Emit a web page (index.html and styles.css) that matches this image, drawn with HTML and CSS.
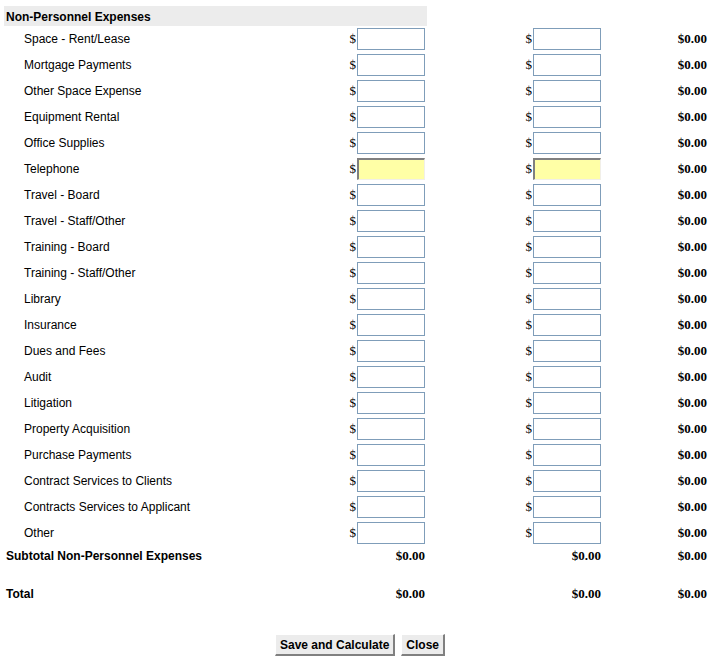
FILE: index.html
```html
<!DOCTYPE html>
<html>
<head>
<meta charset="utf-8">
<link rel="stylesheet" href="styles.css">
</head>
<body>
<div class="sheet">
  <div class="section-head">Non-Personnel Expenses</div>

  <div class="row item"><div class="label">Space - Rent/Lease</div><div class="cell"><span class="cur">$</span><input class="amt" type="text"></div><div class="cell wide"><span class="cur">$</span><input class="amt" type="text"></div><div class="cell total">$0.00</div></div>
  <div class="row item"><div class="label">Mortgage Payments</div><div class="cell"><span class="cur">$</span><input class="amt" type="text"></div><div class="cell wide"><span class="cur">$</span><input class="amt" type="text"></div><div class="cell total">$0.00</div></div>
  <div class="row item"><div class="label">Other Space Expense</div><div class="cell"><span class="cur">$</span><input class="amt" type="text"></div><div class="cell wide"><span class="cur">$</span><input class="amt" type="text"></div><div class="cell total">$0.00</div></div>
  <div class="row item"><div class="label">Equipment Rental</div><div class="cell"><span class="cur">$</span><input class="amt" type="text"></div><div class="cell wide"><span class="cur">$</span><input class="amt" type="text"></div><div class="cell total">$0.00</div></div>
  <div class="row item"><div class="label">Office Supplies</div><div class="cell"><span class="cur">$</span><input class="amt" type="text"></div><div class="cell wide"><span class="cur">$</span><input class="amt" type="text"></div><div class="cell total">$0.00</div></div>
  <div class="row item"><div class="label">Telephone</div><div class="cell"><span class="cur">$</span><input class="amt hl" type="text"></div><div class="cell wide"><span class="cur">$</span><input class="amt hl" type="text"></div><div class="cell total">$0.00</div></div>
  <div class="row item"><div class="label">Travel - Board</div><div class="cell"><span class="cur">$</span><input class="amt" type="text"></div><div class="cell wide"><span class="cur">$</span><input class="amt" type="text"></div><div class="cell total">$0.00</div></div>
  <div class="row item"><div class="label">Travel - Staff/Other</div><div class="cell"><span class="cur">$</span><input class="amt" type="text"></div><div class="cell wide"><span class="cur">$</span><input class="amt" type="text"></div><div class="cell total">$0.00</div></div>
  <div class="row item"><div class="label">Training - Board</div><div class="cell"><span class="cur">$</span><input class="amt" type="text"></div><div class="cell wide"><span class="cur">$</span><input class="amt" type="text"></div><div class="cell total">$0.00</div></div>
  <div class="row item"><div class="label">Training - Staff/Other</div><div class="cell"><span class="cur">$</span><input class="amt" type="text"></div><div class="cell wide"><span class="cur">$</span><input class="amt" type="text"></div><div class="cell total">$0.00</div></div>
  <div class="row item"><div class="label">Library</div><div class="cell"><span class="cur">$</span><input class="amt" type="text"></div><div class="cell wide"><span class="cur">$</span><input class="amt" type="text"></div><div class="cell total">$0.00</div></div>
  <div class="row item"><div class="label">Insurance</div><div class="cell"><span class="cur">$</span><input class="amt" type="text"></div><div class="cell wide"><span class="cur">$</span><input class="amt" type="text"></div><div class="cell total">$0.00</div></div>
  <div class="row item"><div class="label">Dues and Fees</div><div class="cell"><span class="cur">$</span><input class="amt" type="text"></div><div class="cell wide"><span class="cur">$</span><input class="amt" type="text"></div><div class="cell total">$0.00</div></div>
  <div class="row item"><div class="label">Audit</div><div class="cell"><span class="cur">$</span><input class="amt" type="text"></div><div class="cell wide"><span class="cur">$</span><input class="amt" type="text"></div><div class="cell total">$0.00</div></div>
  <div class="row item"><div class="label">Litigation</div><div class="cell"><span class="cur">$</span><input class="amt" type="text"></div><div class="cell wide"><span class="cur">$</span><input class="amt" type="text"></div><div class="cell total">$0.00</div></div>
  <div class="row item"><div class="label">Property Acquisition</div><div class="cell"><span class="cur">$</span><input class="amt" type="text"></div><div class="cell wide"><span class="cur">$</span><input class="amt" type="text"></div><div class="cell total">$0.00</div></div>
  <div class="row item"><div class="label">Purchase Payments</div><div class="cell"><span class="cur">$</span><input class="amt" type="text"></div><div class="cell wide"><span class="cur">$</span><input class="amt" type="text"></div><div class="cell total">$0.00</div></div>
  <div class="row item"><div class="label">Contract Services to Clients</div><div class="cell"><span class="cur">$</span><input class="amt" type="text"></div><div class="cell wide"><span class="cur">$</span><input class="amt" type="text"></div><div class="cell total">$0.00</div></div>
  <div class="row item"><div class="label">Contracts Services to Applicant</div><div class="cell"><span class="cur">$</span><input class="amt" type="text"></div><div class="cell wide"><span class="cur">$</span><input class="amt" type="text"></div><div class="cell total">$0.00</div></div>
  <div class="row item"><div class="label">Other</div><div class="cell"><span class="cur">$</span><input class="amt" type="text"></div><div class="cell wide"><span class="cur">$</span><input class="amt" type="text"></div><div class="cell total">$0.00</div></div>

  <div class="row sum"><div class="label strong">Subtotal Non-Personnel Expenses</div><div class="cell total">$0.00</div><div class="cell wide total">$0.00</div><div class="cell total">$0.00</div></div>
  <div class="row sum grand"><div class="label strong">Total</div><div class="cell total">$0.00</div><div class="cell wide total">$0.00</div><div class="cell total">$0.00</div></div>

  <div class="actions">
    <button class="btn" type="button">Save and Calculate</button>
    <button class="btn" type="button">Close</button>
  </div>
</div>
</body>
</html>
```

FILE: styles.css
```css
html, body {
  margin: 0;
  padding: 0;
  background: #ffffff;
}

body {
  font-family: "Liberation Sans", Arial, sans-serif;
  font-size: 12px;
  color: #000000;
}

.sheet {
  width: 718px;
  padding-top: 6px;
}

.section-head {
  margin-left: 4px;
  width: 421px;
  height: 20px;
  line-height: 22px;
  padding-left: 2px;
  background: #ececec;
  font-weight: bold;
}

.row {
  display: grid;
  grid-template-columns: 340px 85px 176px 106px;
  align-items: center;
}

.item {
  height: 26px;
}

.item .label {
  padding-left: 24px;
}

.label.strong {
  padding-left: 6px;
  font-weight: bold;
}

.cell {
  display: flex;
  justify-content: flex-end;
  align-items: center;
}

.cur {
  font-family: "Liberation Serif", "Times New Roman", serif;
  font-size: 13px;
  color: #000000;
  padding-right: 1px;
}

.amt {
  box-sizing: border-box;
  width: 68px;
  height: 22px;
  margin: 0;
  padding: 0 2px;
  border: 1px solid #7f9db9;
  background: #ffffff;
  font-family: "Liberation Sans", Arial, sans-serif;
  font-size: 12px;
  outline: none;
}

.amt.hl {
  background: #ffffa6;
  border-width: 2px 1px 1px 2px;
  border-style: solid;
  border-color: #808080 #f1efe8 #f1efe8 #808080;
}

.total {
  font-family: "Liberation Serif", "Times New Roman", serif;
  font-size: 13px;
  font-weight: bold;
}

.sum {
  height: 18px;
  margin-top: 1px;
}

.grand {
  margin-top: 20px;
}

.actions {
  display: flex;
  justify-content: center;
  gap: 6px;
  margin-top: 31px;
  padding-left: 2px;
}

.btn {
  box-sizing: border-box;
  height: 22px;
  margin: 0;
  padding: 0 4px;
  font-family: "Liberation Sans", Arial, sans-serif;
  font-size: 12px;
  font-weight: bold;
  color: #000000;
  background: #ececec;
  border-width: 1px 2px 2px 1px;
  border-style: solid;
  border-color: #ffffff #808080 #808080 #ffffff;
  border-radius: 0;
}
```
